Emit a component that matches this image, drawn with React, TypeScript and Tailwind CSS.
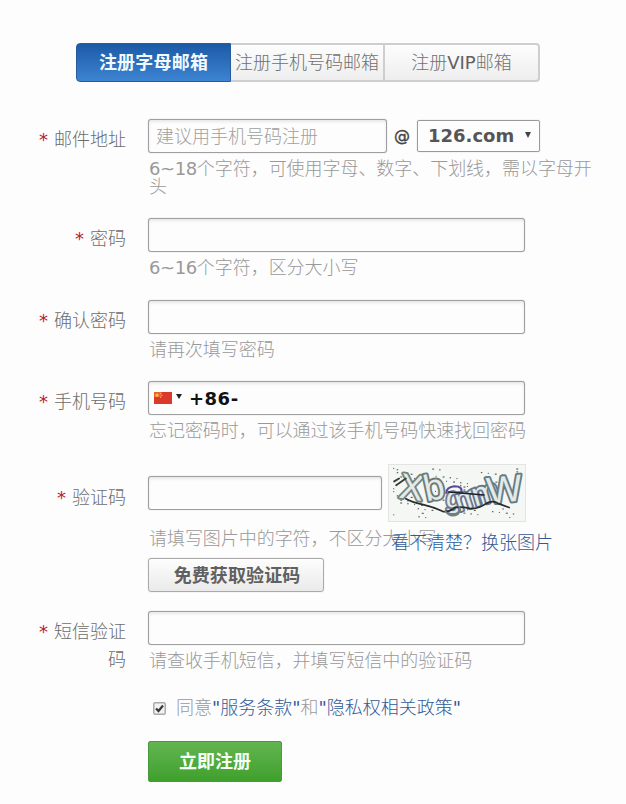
import type { ReactNode } from "react";

const inputClass =
  "block h-[34px] rounded-[3px] border border-[#9f9f9f] bg-[#fdfdfd] shadow-[inset_0_2px_3px_#e8e8e8,0_0_1px_#aaa] outline-none placeholder:text-[#a0a0a0]";

function Row({
  label,
  className,
  labelClass,
  children,
}: {
  label: ReactNode;
  className: string;
  labelClass: string;
  children: ReactNode;
}) {
  return (
    <div className={`flex ${className}`}>
      <div className={`w-[126px] shrink-0 text-right leading-[28px] text-[#6c6c6c] ${labelClass}`}>
        <span className="mr-[6px] font-normal text-[#b8202c]">*</span>
        {label}
      </div>
      <div className="ml-[22px] min-w-0 flex-1">{children}</div>
    </div>
  );
}

function Hint({ children, className = "mt-[7px]" }: { children: ReactNode; className?: string }) {
  return <p className={`w-[450px] pl-px leading-[18px] tracking-[-0.05px] text-[#999] ${className}`}>{children}</p>;
}

function Captcha() {
  const specks = Array.from({ length: 95 }, (_, i) => ({
    x: 3 + ((i * 47.3 + (i % 7) * 11) % 131),
    y: 3 + ((i * 29.7 + (i % 5) * 7) % 51),
    w: 1 + (i % 3) * 0.5,
  }));
  const letters = [
    { c: "X", x: 22, y: 23, r: 8, s: 37, f: "#75847e" },
    { c: "b", x: 45, y: 23, r: -12, s: 38, f: "#6b7a75" },
    { c: "g", x: 66, y: 34, r: 6, s: 29, f: "#707b92" },
    { c: "m", x: 80, y: 34, r: -18, s: 32, f: "#66758f" },
    { c: "m", x: 98, y: 28, r: -16, s: 34, f: "#66758a" },
    { c: "W", x: 118, y: 25, r: -6, s: 39, f: "#647b85" },
  ];
  return (
    <svg width="138" height="58" viewBox="0 0 138 58" className="block border border-[#e4e4e4] bg-[#f5f7f5]">
      {specks.map((p, i) => (
        <rect key={i} x={p.x} y={p.y} width={p.w} height="1.1" fill="#4d514f" />
      ))}
      {letters.map((l, i) => (
        <text
          key={i}
          x={l.x}
          y={l.y}
          fontSize={l.s}
          fontFamily="Liberation Sans, sans-serif"
          textAnchor="middle"
          dominantBaseline="central"
          transform={`rotate(${l.r} ${l.x} ${l.y})`}
          fill="#e3eae8"
          stroke={l.f}
          strokeWidth="4"
          strokeLinejoin="round"
          paintOrder="stroke"
        >
          {l.c}
        </text>
      ))}
      <g fill="none" strokeLinecap="round">
        <path d="M4 17 L9 14 M6 21 L16 14" stroke="#35403d" strokeWidth="2" />
        <path d="M58 29 Q58 23 66 22 Q76 22 73 29" stroke="#574a9c" strokeWidth="2.2" />
        <path d="M60 28 L97 31" stroke="#20202c" strokeWidth="1.5" />
        <path
          d="M16 35 Q23 39 34 41 Q46 44 54 48 Q61 49 67 44 Q74 43 82 45 Q91 46 99 40 Q106 36 112 40 L123 44"
          stroke="#282c2c"
          strokeWidth="1.8"
        />
        <path d="M57 48 Q62 55 70 51 Q74 47 71 43" stroke="#6d8076" strokeWidth="1.7" />
      </g>
    </svg>
  );
}

export default function App() {
  return (
    <main className="h-[804px] w-[626px] overflow-hidden bg-[#fdfdfd] pt-[43px] font-['DejaVu_Sans','Noto_Sans_CJK_SC',sans-serif] text-[18px] leading-[18px] font-light">
      <nav className="ml-[76px] flex h-[39px] w-[464px] rounded-[4px] text-[#707070]">
        <button className="w-[155px] rounded-l-[4px] border border-[#285b9c] bg-linear-to-b from-[#1c5aa6] to-[#3d84d2] font-bold tracking-[0.2px] text-[#f2faff]">
          注册字母邮箱
        </button>
        <button className="w-[154px] border-y-2 border-r-2 border-[#cecece] bg-linear-to-b from-[#fdfdfd] to-[#eee] whitespace-nowrap">
          注册手机号码邮箱
        </button>
        <button className="w-[155px] rounded-r-[4px] border-y-2 border-r-2 border-[#cecece] bg-linear-to-b from-[#fdfdfd] to-[#eee]">
          注册<span className="font-normal text-[#606060]">VIP</span>邮箱
        </button>
      </nav>

      <Row label="邮件地址" className="mt-[37px] h-[99px]" labelClass="pt-[7px]">
        <div className="flex h-[34px] items-center">
          <input className={`${inputClass} w-[239px] px-[7px]`} placeholder="建议用手机号码注册" />
          <span className="w-[30px] text-center text-[16px] font-normal text-[#444] [-webkit-text-stroke:0.4px_#444]">@</span>
          <button className="flex h-[32px] w-[123px] items-center rounded-[2px] border border-[#999] pl-[10px] font-bold text-[#555] shadow-[0_0_1px_#aaa]">
            126.com
            <svg width="6" height="6" viewBox="0 0 6 6" className="mb-[3px] ml-[11px]">
              <path d="M0 0H6L3 6Z" fill="#444" />
            </svg>
          </button>
        </div>
        <Hint>
          <span className="font-normal tracking-[-0.4px]">6~18</span>个字符，可使用字母、数字、下划线，需以字母开头
        </Hint>
      </Row>

      <Row label="密码" className="h-[82px]" labelClass="pt-[7px]">
        <input type="password" className={`${inputClass} w-[377px]`} />
        <Hint>
          <span className="font-normal tracking-[-0.4px]">6~16</span>个字符，区分大小写
        </Hint>
      </Row>

      <Row label="确认密码" className="h-[81px]" labelClass="pt-[7px]">
        <input type="password" className={`${inputClass} w-[377px]`} />
        <Hint>请再次填写密码</Hint>
      </Row>

      <Row label="手机号码" className="h-[83px]" labelClass="pt-[7px]">
        <div className={`${inputClass} w-[377px]`}>
          <div className="flex h-[32px] items-center pl-[5px]">
            <svg width="18" height="12" viewBox="0 0 18 12">
              <rect width="18" height="12" fill="#dc392d" />
              <rect width="8" height="5" fill="#e9642f" />
              <path d="M3 1l.6 1.6h1.7L4 3.6l.5 1.7L3 4.3 1.6 5.3 2 3.6.8 2.6h1.7Z" fill="#f8cf48" />
              <path d="M6 1h1v1H6zM7.5 3h1v1h-1zM6 5h1v1H6z" fill="#f2b83f" />
            </svg>
            <svg width="6" height="5" viewBox="0 0 6 5" className="mb-[3px] ml-[4px]">
              <path d="M0 0H6L3 5Z" fill="#222" />
            </svg>
            <span className="ml-[7px] pt-[2px] font-bold tracking-[0.5px] text-[#111]">+86-</span>
          </div>
        </div>
        <Hint>忘记密码时，可以通过该手机号码快速找回密码</Hint>
      </Row>

      <Row label="验证码" className="h-[147px]" labelClass="pt-[20px]">
        <div className="flex h-[58px]">
          <input className={`${inputClass} mt-[12px] w-[234px]`} />
          <div className="ml-[6px]">
            <Captcha />
          </div>
        </div>
        <div className="relative mt-[8px]">
          <Hint className="">请填写图片中的字符，不区分大小写</Hint>
          <a className="absolute top-[4px] left-[243px] whitespace-nowrap text-[#305a98]">看不清楚？换张图片</a>
        </div>
        <button className="mt-[10px] h-[34px] w-[176px] rounded-[3px] border border-[#aaa] bg-linear-to-b from-[#fdfdfd] to-[#eaeaea] pt-px pl-[2px] font-bold tracking-[0.1px] text-[#606060] shadow-[0_0_1px_#bbb]">
          免费获取验证码
        </button>
      </Row>

      <Row
        label={
          <>
            短信验证
            <br />码
          </>
        }
        className="h-[88px]"
        labelClass="pt-[7px]"
      >
        <input className={`${inputClass} w-[377px]`} />
        <Hint>请查收手机短信，并填写短信中的验证码</Hint>
      </Row>

      <label className="ml-[153px] flex h-[18px] items-center whitespace-nowrap text-[#999]">
        <svg width="13" height="13" viewBox="0 0 13 13" className="mr-[10px]">
          <rect x=".75" y=".75" width="11.5" height="11.5" rx="1.5" fill="#f2f2f2" stroke="#aaa" strokeWidth="1.5" />
          <path d="M3 6.5 5.5 9 10 3.5" fill="none" stroke="#383838" strokeWidth="2.2" />
        </svg>
        同意
        <a className="text-[#305a98]">
          <span className="font-normal">"</span>服务条款<span className="font-normal">"</span>
        </a>
        和
        <a className="text-[#305a98]">
          <span className="font-normal">"</span>隐私权相关政策<span className="font-normal">"</span>
        </a>
      </label>

      <button className="mt-[24px] ml-[148px] block h-[41px] w-[134px] rounded-[2px] border border-[#489b3c] bg-linear-to-b from-[#62b550] to-[#3fa02c] font-bold text-[#f6fff4]">
        立即注册
      </button>
    </main>
  );
}
